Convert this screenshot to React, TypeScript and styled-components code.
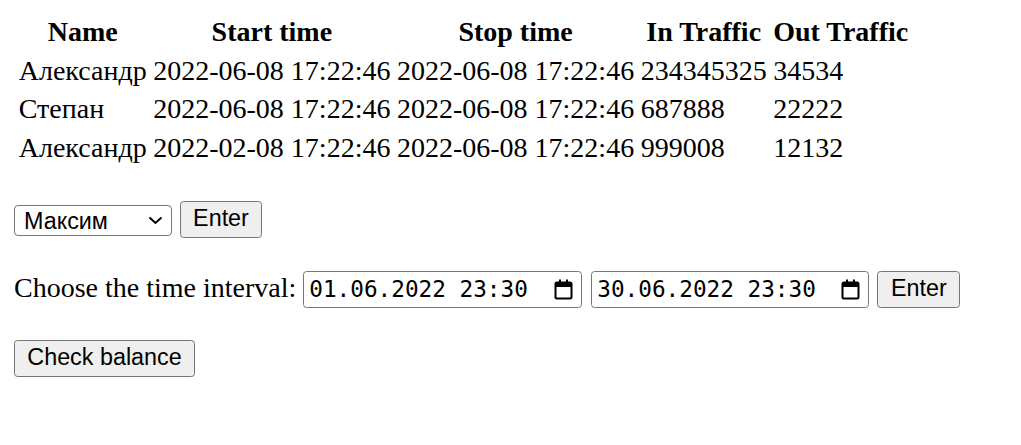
import React from "react";
import styled, { createGlobalStyle } from "styled-components";

const GlobalStyle = createGlobalStyle`
  html, body { margin: 0; padding: 0; background: #ffffff; }
  body { font-family: "Liberation Serif", "Times New Roman", serif; color: #000; }
`;

const Page = styled.div`
  padding: 11.5px 14px 0 14px;
  font-family: "Liberation Serif", "Times New Roman", serif;
  font-size: 28px;
`;

const Table = styled.table`
  border-collapse: separate;
  border-spacing: 3.5px;
  font-size: 28px;
  font-family: "Liberation Serif", "Times New Roman", serif;
`;

const Th = styled.th`
  padding: 1.75px;
  font-weight: bold;
  text-align: center;
  white-space: nowrap;
`;

const Td = styled.td`
  padding: 1.75px;
  text-align: left;
  white-space: nowrap;
`;

const Row = styled.div<{ $top: number }>`
  display: flex;
  align-items: center;
  margin-top: ${(p) => p.$top}px;
  height: 37px;
`;

const SelectWrap = styled.div`
  position: relative;
  width: 158px;
  height: 31px;
  margin-right: 8px;
`;

const Select = styled.select`
  appearance: none;
  -webkit-appearance: none;
  box-sizing: border-box;
  width: 100%;
  height: 100%;
  margin: 0;
  padding: 0 0 0 9px;
  font-family: "Liberation Sans", Arial, sans-serif;
  font-size: 23.33px;
  color: #000;
  background: #fff;
  border: 1px solid #767676;
  border-radius: 4px;
  outline: none;
`;

const Chevron = styled.svg`
  position: absolute;
  right: 9px;
  top: 12px;
  width: 15px;
  height: 9px;
  pointer-events: none;
`;

const Button = styled.button<{ $w: number }>`
  box-sizing: border-box;
  width: ${(p) => p.$w}px;
  height: 37px;
  margin: 0;
  padding: 0 0 1px 0;
  font-family: "Liberation Sans", Arial, sans-serif;
  font-size: 23.33px;
  color: #000;
  background: #efefef;
  border: 1px solid #767676;
  border-radius: 3.5px;
  white-space: nowrap;
`;

const Label = styled.span`
  font-size: 28px;
  line-height: 31px;
  padding-bottom: 3px;
  margin-right: 7px;
  white-space: nowrap;
`;

const DateField = styled.div<{ $w: number; $gap: number }>`
  box-sizing: border-box;
  display: flex;
  align-items: center;
  justify-content: space-between;
  width: ${(p) => p.$w}px;
  height: 37px;
  margin-right: ${(p) => p.$gap}px;
  padding: 0 8px 0 5px;
  border: 1px solid #767676;
  border-radius: 3.5px;
  background: #fff;
`;

const DateText = styled.span`
  font-family: "DejaVu Sans Mono", "Liberation Mono", monospace;
  font-size: 22.7px;
  line-height: 26px;
  color: #000;
  white-space: pre;
`;

const CalIcon = styled.svg`
  width: 19px;
  height: 21px;
  flex: none;
`;

const CalendarIcon = () => (
  <CalIcon viewBox="0 0 19 21">
    <rect x="1.5" y="3.5" width="16" height="16" rx="1.5" fill="none" stroke="#000" strokeWidth="2" />
    <rect x="1.5" y="3.5" width="16" height="4.5" fill="#000" />
    <rect x="5" y="0.5" width="2" height="4" fill="#000" />
    <rect x="12" y="0.5" width="2" height="4" fill="#000" />
  </CalIcon>
);

const rows = [
  ["Александр", "2022-06-08 17:22:46", "2022-06-08 17:22:46", "234345325", "34534"],
  ["Степан", "2022-06-08 17:22:46", "2022-06-08 17:22:46", "687888", "22222"],
  ["Александр", "2022-02-08 17:22:46", "2022-06-08 17:22:46", "999008", "12132"],
];

export default function App() {
  return (
    <>
      <GlobalStyle />
      <Page>
        <Table>
          <thead>
            <tr>
              <Th>Name</Th>
              <Th>Start time</Th>
              <Th>Stop time</Th>
              <Th>In Traffic</Th>
              <Th>Out Traffic</Th>
            </tr>
          </thead>
          <tbody>
            {rows.map((r, i) => (
              <tr key={i}>
                {r.map((c, j) => (
                  <Td key={j}>{c}</Td>
                ))}
              </tr>
            ))}
          </tbody>
        </Table>

        <Row $top={32}>
          <SelectWrap>
            <Select defaultValue="Максим">
              <option>Максим</option>
              <option>Александр</option>
              <option>Степан</option>
            </Select>
            <Chevron viewBox="0 0 15 9">
              <polyline points="1.5,1.5 7.5,7 13.5,1.5" fill="none" stroke="#000" strokeWidth="2" />
            </Chevron>
          </SelectWrap>
          <Button $w={82}>Enter</Button>
        </Row>

        <Row $top={33}>
          <Label>Choose the time interval:</Label>
          <DateField $w={279} $gap={9}>
            <DateText>01.06.2022 23:30</DateText>
            <CalendarIcon />
          </DateField>
          <DateField $w={278} $gap={8}>
            <DateText>30.06.2022 23:30</DateText>
            <CalendarIcon />
          </DateField>
          <Button $w={83}>Enter</Button>
        </Row>

        <Row $top={32}>
          <Button $w={181}>Check balance</Button>
        </Row>
      </Page>
    </>
  );
}
